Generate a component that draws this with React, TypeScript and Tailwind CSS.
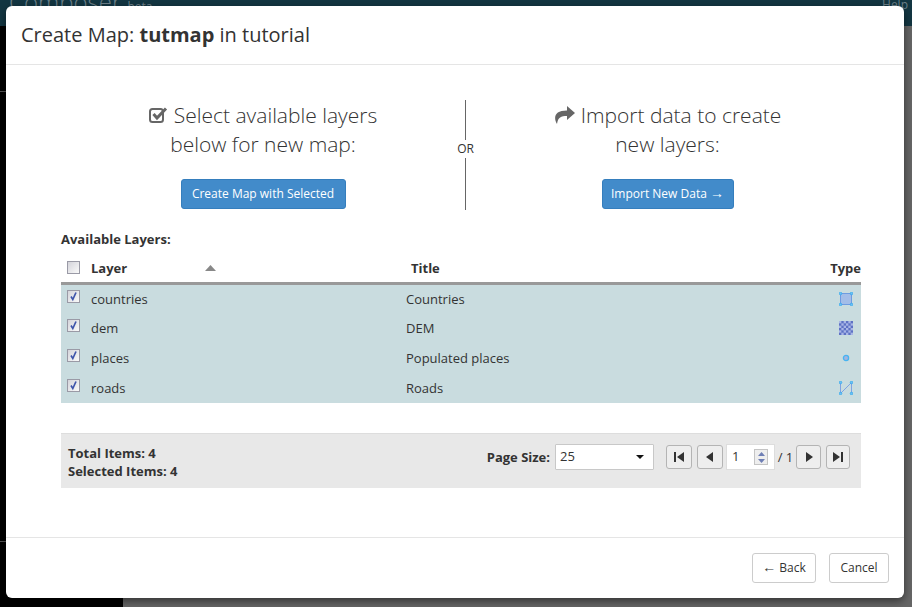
import React from 'react';

const layers = [
    { name: 'countries', title: 'Countries', type: 'polygon' },
    { name: 'dem', title: 'DEM', type: 'raster' },
    { name: 'places', title: 'Populated places', type: 'point' },
    { name: 'roads', title: 'Roads', type: 'line' },
];

const CheckBox: React.FC<{ checked?: boolean }> = ({ checked }) => (
    <span className="block w-[13px] h-[13px] border border-[#9a9aa6] bg-gradient-to-br from-[#d4d4da] to-[#fafafa]">
        {checked && (
            <svg viewBox="0 0 11 11" className="w-[11px] h-[11px]">
                <path d="M3 5.5 L4.8 8.5 L8 1.5" fill="none" stroke="#3f55ab" strokeWidth="1.7" />
            </svg>
        )}
    </span>
);

const Handle: React.FC<{ x: number; y: number }> = ({ x, y }) => (
    <circle cx={x} cy={y} r="1.3" fill="#6cc3f5" stroke="#2ea6ee" strokeWidth="0.7" />
);

const TypeIcon: React.FC<{ type: string }> = ({ type }) => {
    if (type === 'polygon') {
        return (
            <svg width="14" height="14" viewBox="0 0 14 14">
                <rect x="1.5" y="1.5" width="11" height="11" fill="#a3bde8" stroke="#6f9be0" />
                <Handle x={1.5} y={1.5} />
                <Handle x={12.5} y={1.5} />
                <Handle x={1.5} y={12.5} />
                <Handle x={12.5} y={12.5} />
            </svg>
        );
    }
    if (type === 'raster') {
        return (
            <svg width="14" height="14" viewBox="0 0 12 12">
                <rect width="12" height="12" fill="#5e72c4" />
                {[0, 2, 4, 6, 8, 10].map(r =>
                    [0, 2, 4, 6, 8, 10].map(c =>
                        (r + c) % 4 === 0 ? <rect key={`${r}-${c}`} x={c} y={r} width="2" height="2" fill="#a9b6e6" /> : null
                    )
                )}
            </svg>
        );
    }
    if (type === 'point') {
        return (
            <svg width="14" height="14" viewBox="0 0 14 14">
                <circle cx="7" cy="7" r="2.6" fill="#a3b5e0" stroke="#45b4f2" strokeWidth="1.3" />
            </svg>
        );
    }
    return (
        <svg width="14" height="14" viewBox="0 0 14 14">
            <path d="M1.5 1.5 V12.5 L12.5 1.5 V12.5" fill="none" stroke="#7fa3e2" />
            <Handle x={1.5} y={1.5} />
            <Handle x={12.5} y={1.5} />
            <Handle x={1.5} y={12.5} />
            <Handle x={12.5} y={12.5} />
        </svg>
    );
};

const PageButton: React.FC<{ d: string; bar?: 'left' | 'right'; width: string }> = ({ d, bar, width }) => (
    <button className={`${width} h-[24px] flex items-center justify-center rounded-[3px] border border-[#b4b4b4] bg-[#eeeeee]`}>
        <svg width="12" height="12" viewBox="0 0 12 12">
            <path d={d} fill="#333333" />
            {bar === 'left' && <rect x="1" y="1" width="2" height="10" fill="#333333" />}
            {bar === 'right' && <rect x="9" y="1" width="2" height="10" fill="#333333" />}
        </svg>
    </button>
);

export default function App() {
    return (
        <div className="relative h-[607px] w-[912px] overflow-hidden bg-[#666666] font-['Open_Sans',sans-serif] text-[#333333]">
            {/* dimmed page behind the dialog */}
            <div className="h-[26px] bg-[#133642] text-[#6d8089] flex justify-between">
                <span className="text-[24px] leading-[10px] font-light pl-[9px] -mt-[3px]">
                    Composer <span className="text-[12px] font-normal">beta</span>
                </span>
                <span className="text-[12px] leading-[10px] pr-[4px]">Help</span>
            </div>
            <div className="h-[581px] w-[123px] bg-black">
                <div className="h-[66px] border-b border-[#555555]" />
                <div className="h-[450px] border-b border-[#555555]" />
            </div>

            <div className="absolute left-[6px] top-[6px] w-[898px] h-[592px] flex flex-col rounded-[6px] bg-white shadow-[0_3px_9px_rgba(0,0,0,0.5)]">
                <div className="h-[59px] shrink-0 border-b border-[#e5e5e5] px-[15px] flex items-center">
                    <h4 className="text-[20px] leading-[28px] font-normal">
                        Create Map: <strong className="font-bold">tutmap</strong> in tutorial
                    </h4>
                </div>

                <div className="flex-1 pl-[55px] pr-[43px] pt-[35px]">
                    <div className="flex h-[110px]">
                        <div className="w-[404px] flex flex-col items-center pt-[1px]">
                            <p className="text-[21px] leading-[29px] font-light text-center">
                                <svg width="19" height="18" viewBox="0 0 19 18" className="inline-block align-[-1px] mr-[6px]">
                                    <rect x="1" y="3" width="13" height="13" rx="2.5" fill="none" stroke="#666666" strokeWidth="2" />
                                    <path d="M4.5 8 L8 12 L17 2.5" fill="none" stroke="#666666" strokeWidth="3" />
                                </svg>
                                Select available layers
                                <br />
                                below for new map:
                            </p>
                            <button className="mt-[20px] h-[30px] w-[165px] rounded-[3px] border border-[#357ebd] bg-[#428bca] text-white text-[12px]">
                                Create Map with Selected
                            </button>
                        </div>
                        <div className="w-[1px] flex flex-col items-center shrink-0">
                            <div className="w-[1px] h-[40px] bg-[#666666]" />
                            <span className="bg-white h-[18px] text-[12px] leading-[18px] whitespace-nowrap">OR</span>
                            <div className="w-[1px] flex-1 bg-[#666666]" />
                        </div>
                        <div className="flex-1 flex flex-col items-center pt-[1px] pl-2">
                            <p className="text-[21px] leading-[29px] font-light text-center">
                                <svg width="21" height="18" viewBox="0 0 21 18" className="inline-block align-[-1px] mr-[6px]">
                                    <path d="M13 0 L21 7 L13 14 V10 C7 10 4 11 3 18 C-1 11 1 4.5 13 4.5 Z" fill="#666666" />
                                </svg>
                                Import data to create
                                <br />
                                new layers:
                            </p>
                            <button className="mt-[20px] h-[30px] w-[132px] rounded-[3px] border border-[#357ebd] bg-[#428bca] text-white text-[12px]">
                                Import New Data <span className="font-['Liberation_Sans'] text-[14px] leading-[14px]">→</span>
                            </button>
                        </div>
                    </div>

                    <div className="mt-[21px] text-[13px] leading-[17px] font-bold">Available Layers:</div>

                    <table className="mt-[6px] w-[800px] table-fixed border-collapse text-[13px]">
                        <thead>
                            <tr className="h-[29px] border-b-[3px] border-[#999999]">
                                <th className="w-[30px] pl-[6px] font-normal">
                                    <CheckBox />
                                </th>
                                <th className="w-[315px] text-left font-bold pt-[1px]">
                                    <div className="flex items-center justify-between pr-[190px]">
                                        Layer
                                        <svg width="11" height="6" viewBox="0 0 11 6" className="-mt-[1px]">
                                            <path d="M5.5 0 L11 6 H0 Z" fill="#888888" />
                                        </svg>
                                    </div>
                                </th>
                                <th className="text-left pl-[5px] pt-[1px] font-bold">Title</th>
                                <th className="w-[60px] text-right pt-[1px] font-bold">Type</th>
                            </tr>
                        </thead>
                        <tbody>
                            {layers.map(layer => (
                                <tr key={layer.name} className="h-[30px] bg-[#c9dcdf]">
                                    <td className="pl-[6px] pb-[5px]">
                                        <CheckBox checked />
                                    </td>
                                    <td className="pt-[1px]">{layer.name}</td>
                                    <td className="pt-[1px]">{layer.title}</td>
                                    <td>
                                        <div className="flex justify-end pr-[8px]">
                                            <TypeIcon type={layer.type} />
                                        </div>
                                    </td>
                                </tr>
                            ))}
                        </tbody>
                    </table>

                    <div className="mt-[30px] h-[55px] border-t border-[#dddddd] bg-[#e8e8e8] pl-[7px] pr-[11px] flex justify-between text-[13px] font-bold">
                        <div className="pt-[10px] leading-[18px]">
                            <div>Total Items: 4</div>
                            <div>Selected Items: 4</div>
                        </div>
                        <div className="pt-[10px] flex items-start font-normal">
                            <span className="font-bold leading-[26px] mr-[5px]">Page Size:</span>
                            <div className="w-[99px] h-[26px] rounded-[1px] border border-[#c8c8c8] bg-white flex items-center justify-between pl-[4px] pr-[9px] mr-[12px]">
                                25
                                <svg width="8" height="4" viewBox="0 0 8 4">
                                    <path d="M0 0 H8 L4 4 Z" fill="#111111" />
                                </svg>
                            </div>
                            <div className="flex items-center gap-[5px] h-[26px]">
                                <PageButton width="w-[26px]" d="M11 1 V11 L4 6 Z" bar="left" />
                                <PageButton width="w-[26px]" d="M9 1 V11 L2 6 Z" />
                            </div>
                            <div className="ml-[3px] w-[49px] h-[26px] border border-[#dddddd] bg-white flex items-center justify-between pl-[5px] pr-[6px]">
                                1
                                <div className="flex flex-col w-[14px] h-[16px] border border-[#c4c4c4] bg-[#eeeeee] items-center justify-around">
                                    <svg width="7" height="4" viewBox="0 0 7 4"><path d="M3.5 0 L7 4 H0 Z" fill="#6f7fb5" /></svg>
                                    <svg width="7" height="4" viewBox="0 0 7 4"><path d="M0 0 H7 L3.5 4 Z" fill="#6f7fb5" /></svg>
                                </div>
                            </div>
                            <span className="leading-[26px] w-[21px] text-center">/ 1</span>
                            <div className="flex items-center gap-[5px] h-[26px]">
                                <PageButton width="w-[25px]" d="M3 1 V11 L10 6 Z" />
                                <PageButton width="w-[24px]" d="M1 1 V11 L8 6 Z" bar="right" />
                            </div>
                        </div>
                    </div>
                </div>

                <div className="h-[61px] shrink-0 border-t border-[#e5e5e5] px-[15px] pt-[15px] flex justify-end gap-[13px] text-[12px]">
                    <button className="h-[30px] w-[64px] rounded-[3px] border border-[#cccccc] bg-white">
                        <span className="font-['Liberation_Sans'] text-[14px] leading-[14px]">←</span> Back
                    </button>
                    <button className="h-[30px] w-[60px] rounded-[3px] border border-[#cccccc] bg-white">Cancel</button>
                </div>
            </div>
        </div>
    );
}
